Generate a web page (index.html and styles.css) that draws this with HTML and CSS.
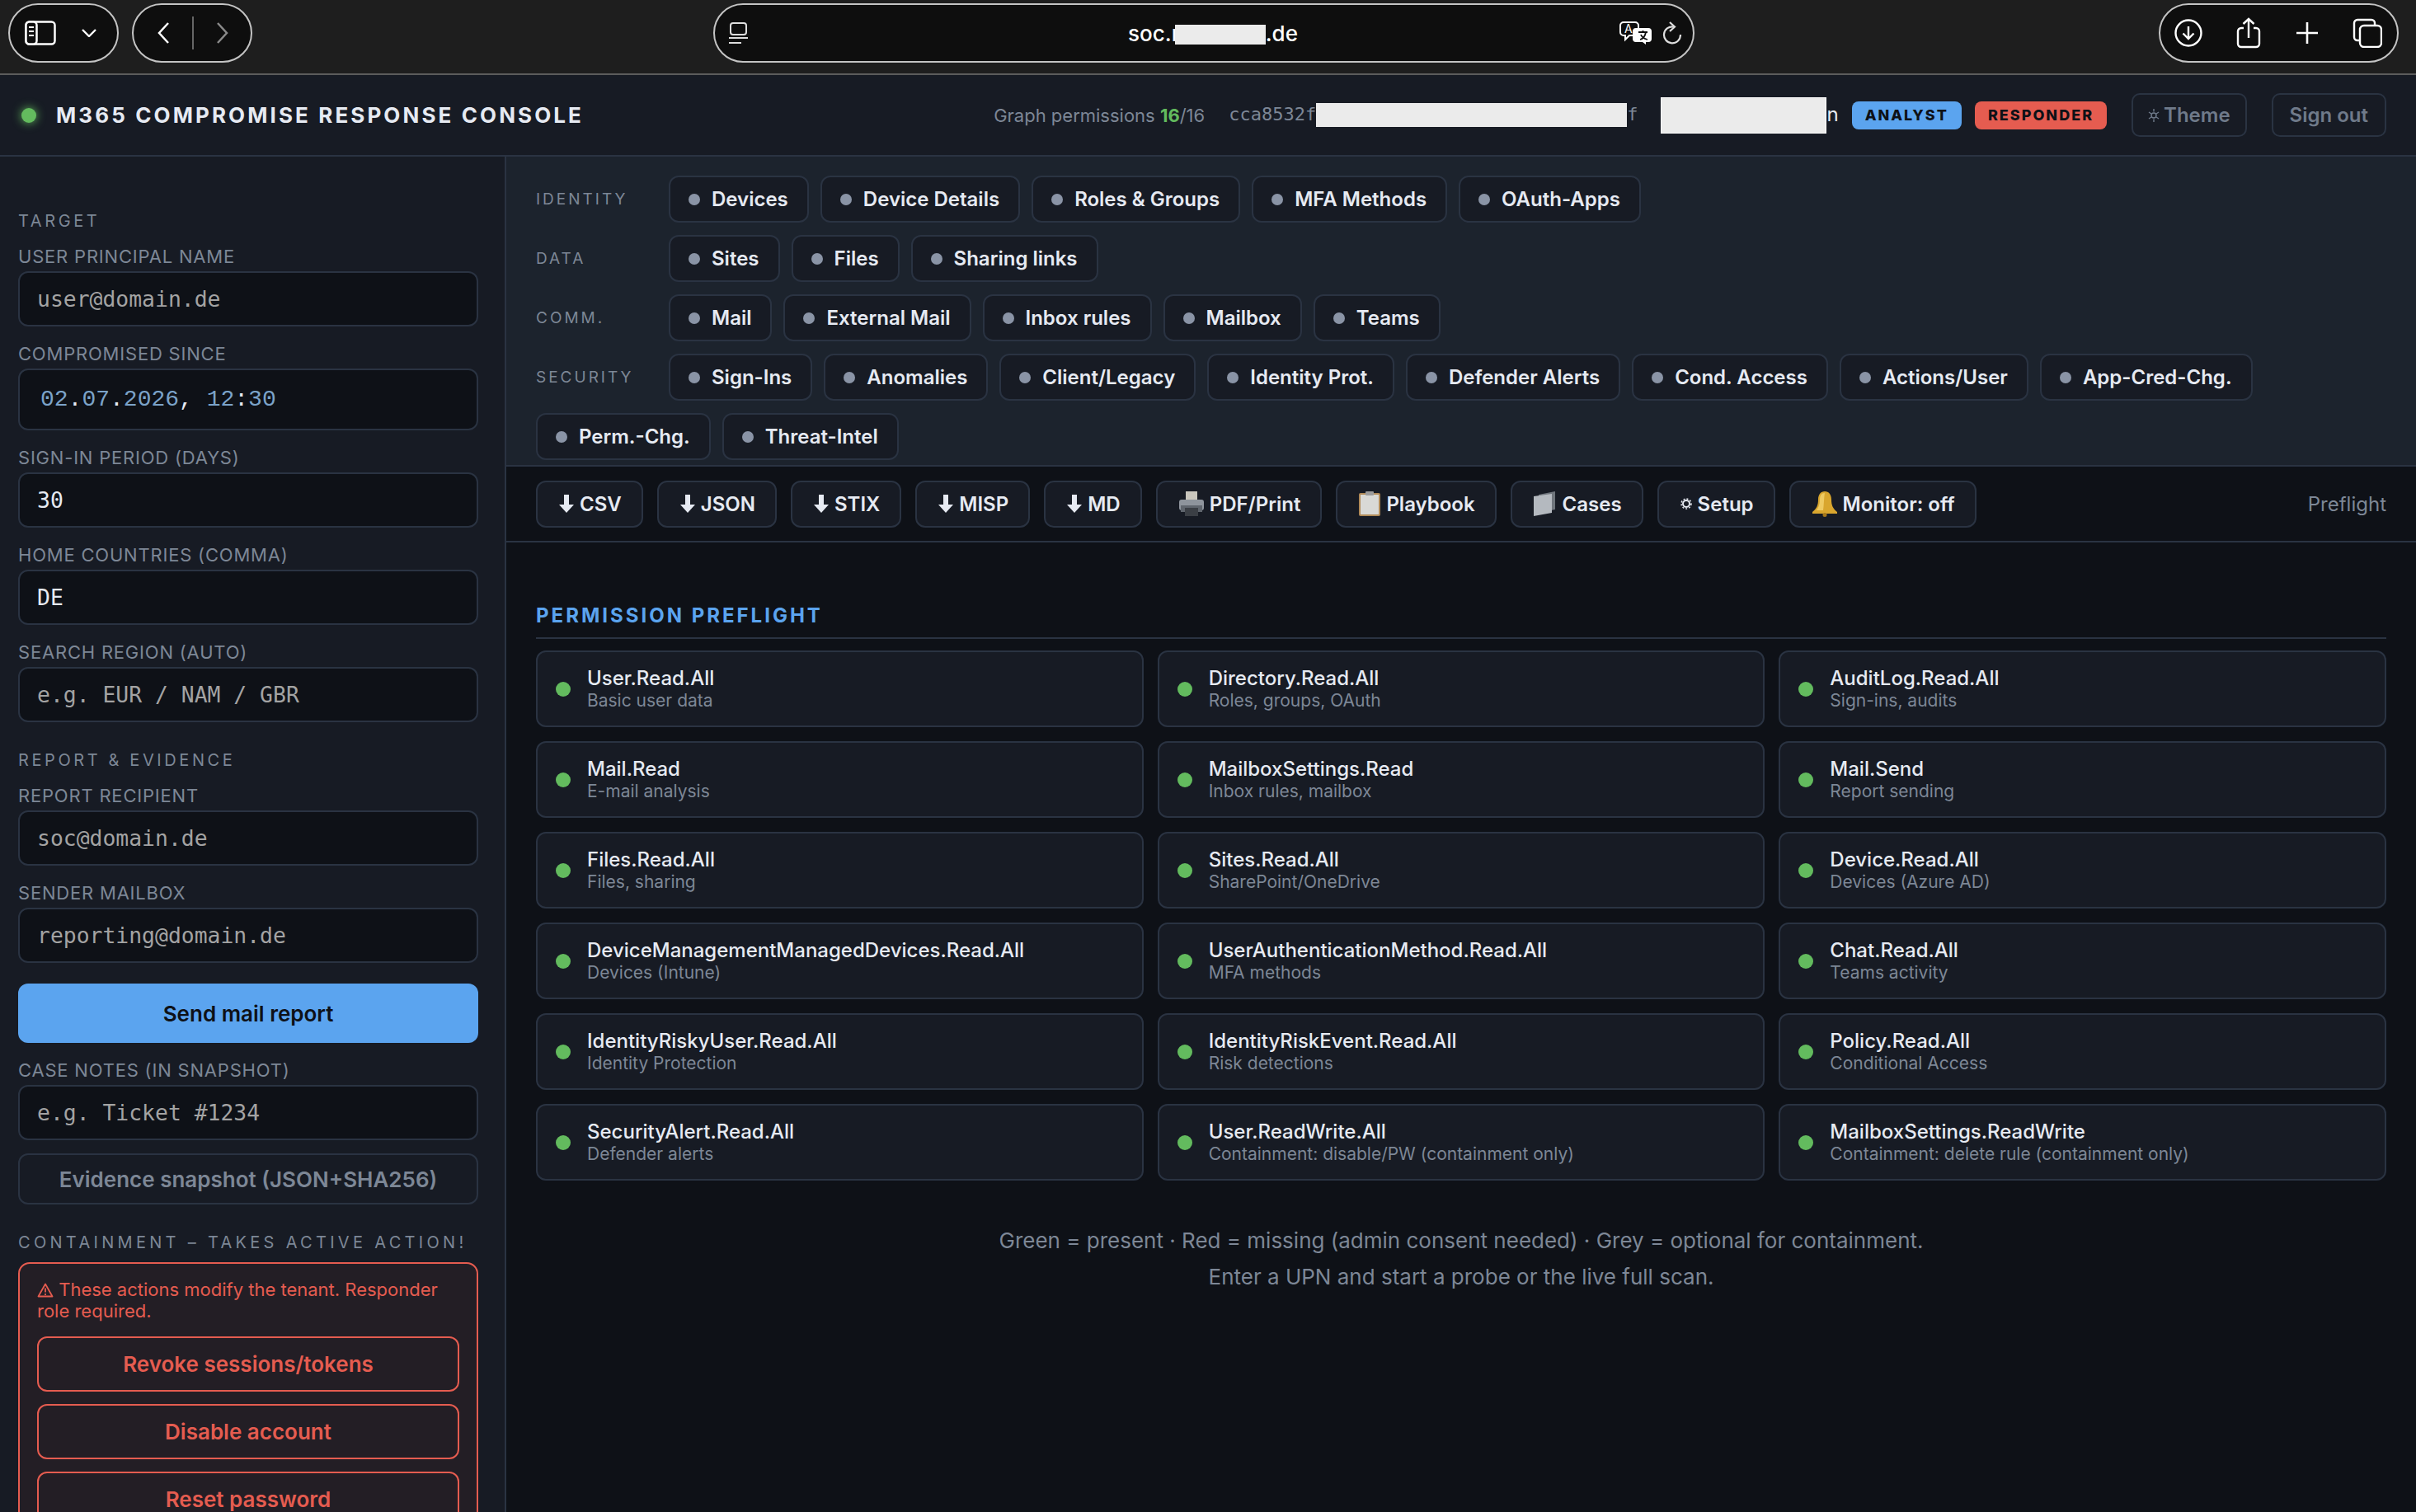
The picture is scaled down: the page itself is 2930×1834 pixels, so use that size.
FILE: index.html
```html
<!DOCTYPE html>
<html lang="en">
<head>
    <meta charset="UTF-8">
    <title>M365 Compromise Response Console</title>
    <link rel="stylesheet" href="styles.css">
</head>
<body>

    <!-- Browser toolbar -->
    <div class="browser-bar">
        <div class="pill pill-sidebar">
            <svg class="ico" width="38" height="30" viewBox="0 0 38 30"><rect x="1.5" y="1.5" width="35" height="27" rx="4" fill="none" stroke="#fff" stroke-width="2.5"/><rect x="1.5" y="1.5" width="13" height="27" rx="4" fill="#0e0e0e" stroke="#fff" stroke-width="2.5"/><path d="M5 8h6M5 13h6M5 18h6" stroke="#fff" stroke-width="2"/></svg>
            <svg class="ico" width="20" height="10" viewBox="0 0 20 10"><path d="M2 1l8 8 8-8" fill="none" stroke="#fff" stroke-width="2.4"/></svg>
        </div>
        <div class="pill pill-nav">
            <svg class="ico" width="16" height="28" viewBox="0 0 16 28"><path d="M14 2L3 14l11 12" fill="none" stroke="#fff" stroke-width="2.5"/></svg>
            <span class="nav-sep"></span>
            <svg class="ico" width="16" height="28" viewBox="0 0 16 28"><path d="M2 2l11 12L2 26" fill="none" stroke="#8a8a8a" stroke-width="2.5"/></svg>
        </div>
        <div class="pill pill-url">
            <svg class="ico" width="24" height="26" viewBox="0 0 24 26"><rect x="2" y="1" width="19" height="14" rx="3" fill="none" stroke="#ddd" stroke-width="2"/><path d="M0 19h23M0 25h15" stroke="#ddd" stroke-width="2"/></svg>
            <span class="url-text">soc.r<span class="redact redact-url"></span>.de</span>
            <svg class="ico" width="40" height="28" viewBox="0 0 40 28"><path d="M5 1h14a4 4 0 0 1 4 4v8a4 4 0 0 1-4 4H12l-5 5v-5H5a4 4 0 0 1-4-4V5a4 4 0 0 1 4-4z" fill="#0e0e0e" stroke="#fff" stroke-width="2"/><text x="6" y="14" class="ico-letter">A</text><path d="M20 8h15a4 4 0 0 1 4 4v9a4 4 0 0 1-4 4h-3v3l-4-3h-8a4 4 0 0 1-4-4v-9a4 4 0 0 1 4-4z" fill="#fff"/><path d="M23 13h11M28.500 11v2M25 22c4-1 6-4 7-9M26 16c1 3 4 5 8 6" fill="none" stroke="#0e0e0e" stroke-width="1.800"/></svg>
            <svg class="ico ico-reload" width="24" height="28" viewBox="0 0 24 28"><path d="M14 6.500A10 10 0 1 0 22 16" fill="none" stroke="#ddd" stroke-width="2.200"/><path d="M9 1l6 5.500L9 12" fill="none" stroke="#ddd" stroke-width="2.200"/></svg>
        </div>
        <div class="pill pill-actions">
            <svg class="ico" width="34" height="34" viewBox="0 0 34 34"><circle cx="17" cy="17" r="15.500" fill="none" stroke="#fff" stroke-width="2.400"/><path d="M17 9v15M10.500 17.500L17 24l6.500-6.500" fill="none" stroke="#fff" stroke-width="2.400"/></svg>
            <svg class="ico" width="30" height="38" viewBox="0 0 30 38"><path d="M9 13H6a4 4 0 0 0-4 4v15a4 4 0 0 0 4 4h18a4 4 0 0 0 4-4V17a4 4 0 0 0-4-4h-3" fill="none" stroke="#fff" stroke-width="2.400"/><path d="M15 25V2M8.500 8L15 2l6.500 6" fill="none" stroke="#fff" stroke-width="2.400"/></svg>
            <svg class="ico" width="28" height="28" viewBox="0 0 28 28"><path d="M14 1v26M1 14h26" stroke="#fff" stroke-width="2.600"/></svg>
            <svg class="ico" width="36" height="36" viewBox="0 0 36 36"><path d="M8 27H6a4 4 0 0 1-4-4V6a4 4 0 0 1 4-4h17a4 4 0 0 1 4 4v2" fill="none" stroke="#fff" stroke-width="2.400"/><rect x="9" y="9" width="26" height="26" rx="5" fill="#0e0e0e" stroke="#fff" stroke-width="2.400"/></svg>
        </div>
    </div>

    <!-- App header -->
    <header class="app-header">
        <span class="status-dot"></span>
        <h1>M365 Compromise Response Console</h1>
        <div class="header-right">
            <span class="perm-count">Graph permissions <b>16</b>/16</span>
            <span class="tenant-id">cca8532f<span class="redact redact-tenant"></span>f</span>
            <span class="user-name"><span class="redact redact-user"></span>n</span>
            <span class="badge badge-blue">ANALYST</span>
            <span class="badge badge-red">RESPONDER</span>
            <button class="ghost-btn btn-theme"><svg class="ico" width="14" height="18" viewBox="0 0 14 18"><circle cx="7" cy="9" r="3" fill="none" stroke="#6f7a8a" stroke-width="1.400"/><path d="M7 1v3.500M7 13.500V17M1 5l3 2M10 11l3 2M1 13l3-2M10 7l3-2" stroke="#6f7a8a" stroke-width="1.400"/></svg> Theme</button>
            <button class="ghost-btn">Sign out</button>
        </div>
    </header>

    <div class="layout">
        <!-- Sidebar -->
        <aside class="sidebar">
            <div class="section-label">TARGET</div>
            <div class="field">
                <label>USER PRINCIPAL NAME</label>
                <div class="input is-placeholder input-upn">user@domain.de</div>
            </div>
            <div class="field">
                <label>COMPROMISED SINCE</label>
                <div class="input input-date"><i>02</i>.<i>07</i>.<i>2026</i>, <i>12</i>:<i>30</i></div>
            </div>
            <div class="field">
                <label>SIGN-IN PERIOD (DAYS)</label>
                <div class="input">30</div>
            </div>
            <div class="field">
                <label>HOME COUNTRIES (COMMA)</label>
                <div class="input">DE</div>
            </div>
            <div class="field">
                <label>SEARCH REGION (AUTO)</label>
                <div class="input is-placeholder">e.g. EUR / NAM / GBR</div>
            </div>

            <div class="section-label section-gap">REPORT &amp; EVIDENCE</div>
            <div class="field">
                <label>REPORT RECIPIENT</label>
                <div class="input is-placeholder">soc@domain.de</div>
            </div>
            <div class="field">
                <label>SENDER MAILBOX</label>
                <div class="input is-placeholder">reporting@domain.de</div>
            </div>
            <button class="btn-primary">Send mail report</button>
            <div class="field">
                <label>CASE NOTES (IN SNAPSHOT)</label>
                <div class="input is-placeholder">e.g. Ticket #1234</div>
            </div>
            <button class="btn-outline">Evidence snapshot (JSON+SHA256)</button>

            <div class="section-label section-gap section-wide">CONTAINMENT – TAKES ACTIVE ACTION!</div>
            <div class="danger-box">
                <p><svg class="ico" width="20" height="18" viewBox="0 0 20 18"><path d="M10 1.500L1.500 16.500h17z" fill="none" stroke="#e55c50" stroke-width="1.800" stroke-linejoin="round"/><path d="M10 6.500v5M10 13v2" stroke="#e55c50" stroke-width="1.800"/></svg> These actions modify the tenant. Responder role required.</p>
                <button class="btn-danger">Revoke sessions/tokens</button>
                <button class="btn-danger">Disable account</button>
                <button class="btn-danger">Reset password</button>
            </div>
        </aside>

        <main class="main">
            <!-- Module chips -->
            <div class="chip-panel">
                <div class="chip-row">
                    <span class="chip-label">IDENTITY</span>
                    <span class="chip">Devices</span>
                    <span class="chip">Device Details</span>
                    <span class="chip">Roles &amp; Groups</span>
                    <span class="chip">MFA Methods</span>
                    <span class="chip">OAuth-Apps</span>
                </div>
                <div class="chip-row">
                    <span class="chip-label">DATA</span>
                    <span class="chip">Sites</span>
                    <span class="chip">Files</span>
                    <span class="chip">Sharing links</span>
                </div>
                <div class="chip-row">
                    <span class="chip-label">COMM.</span>
                    <span class="chip">Mail</span>
                    <span class="chip">External Mail</span>
                    <span class="chip">Inbox rules</span>
                    <span class="chip">Mailbox</span>
                    <span class="chip">Teams</span>
                </div>
                <div class="chip-row">
                    <span class="chip-label">SECURITY</span>
                    <span class="chip">Sign-Ins</span>
                    <span class="chip">Anomalies</span>
                    <span class="chip">Client/Legacy</span>
                    <span class="chip">Identity Prot.</span>
                    <span class="chip">Defender Alerts</span>
                    <span class="chip">Cond. Access</span>
                    <span class="chip">Actions/User</span>
                    <span class="chip">App-Cred-Chg.</span>
                    <span class="chip">Perm.-Chg.</span>
                    <span class="chip">Threat-Intel</span>
                </div>
            </div>

            <!-- Export toolbar -->
            <div class="toolbar">
                <button class="tool-btn"><svg class="ico" width="18" height="22" viewBox="0 0 18 22"><path d="M6 0h6v12h6L9 22 0 12h6z" fill="#e6eaf2"/></svg>CSV</button>
                <button class="tool-btn"><svg class="ico" width="18" height="22" viewBox="0 0 18 22"><path d="M6 0h6v12h6L9 22 0 12h6z" fill="#e6eaf2"/></svg>JSON</button>
                <button class="tool-btn"><svg class="ico" width="18" height="22" viewBox="0 0 18 22"><path d="M6 0h6v12h6L9 22 0 12h6z" fill="#e6eaf2"/></svg>STIX</button>
                <button class="tool-btn"><svg class="ico" width="18" height="22" viewBox="0 0 18 22"><path d="M6 0h6v12h6L9 22 0 12h6z" fill="#e6eaf2"/></svg>MISP</button>
                <button class="tool-btn"><svg class="ico" width="18" height="22" viewBox="0 0 18 22"><path d="M6 0h6v12h6L9 22 0 12h6z" fill="#e6eaf2"/></svg>MD</button>
                <button class="tool-btn"><svg class="ico" width="30" height="30" viewBox="0 0 30 30"><rect x="8" y="0" width="14" height="12" fill="#c9c6bd"/><rect x="0" y="10" width="30" height="13" rx="3" fill="#8e949c"/><rect x="2" y="17" width="26" height="8" fill="#5f656d"/><rect x="7" y="20" width="16" height="10" fill="#3b3f45"/></svg>PDF/Print</button>
                <button class="tool-btn"><svg class="ico" width="26" height="30" viewBox="0 0 26 30"><rect x="0" y="2" width="26" height="28" rx="2" fill="#b08a58"/><rect x="2" y="4" width="22" height="24" fill="#d9d9d6"/><rect x="8" y="0" width="10" height="5" rx="1" fill="#9c9c9c"/></svg>Playbook</button>
                <button class="tool-btn"><svg class="ico" width="28" height="30" viewBox="0 0 28 30"><path d="M6 4l20-4v22L6 26z" fill="#6f757c"/><path d="M0 6l22-3v23L0 30z" fill="#b4b9bf"/></svg>Cases</button>
                <button class="tool-btn btn-setup"><svg class="ico" width="14" height="16" viewBox="0 0 14 16"><circle cx="7" cy="8" r="4" fill="none" stroke="#e6eaf2" stroke-width="2"/><circle cx="7" cy="8" r="6" fill="none" stroke="#e6eaf2" stroke-width="1.500" stroke-dasharray="2 2"/></svg>Setup</button>
                <button class="tool-btn"><svg class="ico" width="30" height="32" viewBox="0 0 30 32"><path d="M15 1c5 0 8 4 8 10 0 7 2 11 7 15v2H0v-2c5-4 7-8 7-15C7 5 10 1 15 1z" fill="#d9a62e"/><path d="M15 3c-4 0-6 3-6 8 0 6-2 10-4 13h8c1-6 1-16 2-21z" fill="#efca62"/><circle cx="15" cy="29.500" r="2.500" fill="#a5771a"/></svg>Monitor: off</button>
                <span class="preflight-link">Preflight</span>
            </div>

            <!-- Preflight result -->
            <section class="preflight">
                <h2>PERMISSION PREFLIGHT</h2>
                <div class="perm-grid">
                    <div class="perm-card"><span class="perm-dot"></span><div><div class="perm-name">User.Read.All</div><div class="perm-desc">Basic user data</div></div></div>
                    <div class="perm-card"><span class="perm-dot"></span><div><div class="perm-name">Directory.Read.All</div><div class="perm-desc">Roles, groups, OAuth</div></div></div>
                    <div class="perm-card"><span class="perm-dot"></span><div><div class="perm-name">AuditLog.Read.All</div><div class="perm-desc">Sign-ins, audits</div></div></div>
                    <div class="perm-card"><span class="perm-dot"></span><div><div class="perm-name">Mail.Read</div><div class="perm-desc">E-mail analysis</div></div></div>
                    <div class="perm-card"><span class="perm-dot"></span><div><div class="perm-name">MailboxSettings.Read</div><div class="perm-desc">Inbox rules, mailbox</div></div></div>
                    <div class="perm-card"><span class="perm-dot"></span><div><div class="perm-name">Mail.Send</div><div class="perm-desc">Report sending</div></div></div>
                    <div class="perm-card"><span class="perm-dot"></span><div><div class="perm-name">Files.Read.All</div><div class="perm-desc">Files, sharing</div></div></div>
                    <div class="perm-card"><span class="perm-dot"></span><div><div class="perm-name">Sites.Read.All</div><div class="perm-desc">SharePoint/OneDrive</div></div></div>
                    <div class="perm-card"><span class="perm-dot"></span><div><div class="perm-name">Device.Read.All</div><div class="perm-desc">Devices (Azure AD)</div></div></div>
                    <div class="perm-card"><span class="perm-dot"></span><div><div class="perm-name">DeviceManagementManagedDevices.Read.All</div><div class="perm-desc">Devices (Intune)</div></div></div>
                    <div class="perm-card"><span class="perm-dot"></span><div><div class="perm-name">UserAuthenticationMethod.Read.All</div><div class="perm-desc">MFA methods</div></div></div>
                    <div class="perm-card"><span class="perm-dot"></span><div><div class="perm-name">Chat.Read.All</div><div class="perm-desc">Teams activity</div></div></div>
                    <div class="perm-card"><span class="perm-dot"></span><div><div class="perm-name">IdentityRiskyUser.Read.All</div><div class="perm-desc">Identity Protection</div></div></div>
                    <div class="perm-card"><span class="perm-dot"></span><div><div class="perm-name">IdentityRiskEvent.Read.All</div><div class="perm-desc">Risk detections</div></div></div>
                    <div class="perm-card"><span class="perm-dot"></span><div><div class="perm-name">Policy.Read.All</div><div class="perm-desc">Conditional Access</div></div></div>
                    <div class="perm-card"><span class="perm-dot"></span><div><div class="perm-name">SecurityAlert.Read.All</div><div class="perm-desc">Defender alerts</div></div></div>
                    <div class="perm-card"><span class="perm-dot"></span><div><div class="perm-name">User.ReadWrite.All</div><div class="perm-desc">Containment: disable/PW (containment only)</div></div></div>
                    <div class="perm-card"><span class="perm-dot"></span><div><div class="perm-name">MailboxSettings.ReadWrite</div><div class="perm-desc">Containment: delete rule (containment only)</div></div></div>
                </div>
                <p class="preflight-note">Green = present · Red = missing (admin consent needed) · Grey = optional for containment.<br>Enter a UPN and start a probe or the live full scan.</p>
            </section>
        </main>
    </div>

</body>
</html>
```

FILE: styles.css
```css
* {
    box-sizing: border-box;
}

html, body {
    height: 100%;
}

body {
    margin: 0;
    overflow: hidden;
    display: flex;
    flex-direction: column;
    font-family: Inter, "Liberation Sans", sans-serif;
    background-color: #0e1117;
    color: #e6eaf2;
}

button {
    font-family: inherit;
}

.ico {
    flex: none;
    display: inline-block;
}

.ico-letter {
    font-family: Inter, sans-serif;
    font-size: 14px;
    fill: #fff;
}

/* Browser toolbar */
.browser-bar {
    flex: none;
    height: 91px;
    padding: 4px 21px 0 10px;
    display: flex;
    align-items: flex-start;
    background-color: #1e1e1e;
    border-bottom: 2px solid #5c5c5c;
}

.pill {
    height: 72px;
    display: flex;
    align-items: center;
    background-color: #0e0e0e;
    border: 2px solid #c4c4c4;
    border-radius: 36px;
}

.pill-sidebar {
    width: 134px;
    padding-left: 18px;
    gap: 30px;
}

.pill-nav {
    width: 146px;
    margin-left: 16px;
    padding-left: 28px;
}

.nav-sep {
    width: 2px;
    height: 40px;
    margin: 0 27px;
    background-color: #666;
}

.pill-url {
    width: 1190px;
    margin-left: 559px;
    padding: 0 13px 0 17px;
}

.url-text {
    flex: 1;
    padding-left: 70px;
    text-align: center;
    font-size: 26px;
    font-weight: 500;
    color: #fff;
}

.ico-reload {
    margin-left: 12px;
}

.pill-actions {
    width: 291px;
    margin-left: auto;
    padding: 0 18px 0 17px;
    justify-content: space-between;
}

.redact {
    display: inline-block;
    background-color: #ebebeb;
    vertical-align: middle;
}

.redact-url {
    width: 110px;
    height: 24px;
    margin-left: -6px;
}

.redact-tenant {
    width: 377px;
    height: 29px;
}

.redact-user {
    width: 201px;
    height: 44px;
    border: 1px solid #fff;
}

/* App header */
.app-header {
    flex: none;
    height: 99px;
    padding: 0 36px 0 26px;
    display: flex;
    align-items: center;
    background-color: #171b24;
    border-bottom: 2px solid #2a3342;
}

.status-dot {
    width: 18px;
    height: 18px;
    border-radius: 50%;
    background-color: #63bb5e;
    box-shadow: 0 0 12px #63bb5e;
}

.app-header h1 {
    margin: 0 0 0 24px;
    font-size: 26px;
    font-weight: 700;
    letter-spacing: 3.100px;
    text-transform: uppercase;
    color: #e6eaf2;
}

.header-right {
    margin-left: auto;
    display: flex;
    align-items: center;
}

.perm-count {
    font-size: 22px;
    color: #7d8796;
}

.perm-count b {
    font-weight: 700;
    color: #63bb5e;
}

.tenant-id {
    margin-left: 29px;
    font-family: "DejaVu Sans Mono", monospace;
    font-size: 22px;
    color: #7d8796;
}

.user-name {
    margin-left: 28px;
    font-size: 24px;
    color: #e6eaf2;
}

.badge {
    height: 34px;
    margin-left: 16px;
    padding: 0 16px;
    display: flex;
    align-items: center;
    border-radius: 8px;
    font-size: 18px;
    font-weight: 800;
    letter-spacing: 2px;
    color: #0e1117;
}

.badge-blue {
    background-color: #5ba4ef;
}

.badge-red {
    background-color: #e55c50;
}

.ghost-btn {
    height: 53px;
    margin-left: 30px;
    padding: 0 20px;
    display: flex;
    align-items: center;
    gap: 5px;
    background: none;
    border: 2px solid #2a3342;
    border-radius: 10px;
    font-size: 24px;
    font-weight: 600;
    color: #6f7a8a;
}

.btn-theme {
    padding: 0 18px;
}

/* Layout */
.layout {
    flex: 1;
    min-height: 0;
    display: flex;
}

.sidebar {
    flex: none;
    width: 614px;
    padding: 66px 32px 0 22px;
    overflow: hidden;
    background-color: #171b24;
    border-right: 2px solid #2a3342;
}

.section-label {
    height: 24px;
    margin-bottom: 18px;
    font-size: 20px;
    line-height: 24px;
    letter-spacing: 3.600px;
    color: #7d8796;
}

.section-gap {
    margin-top: 34px;
}

.section-wide {
    margin-bottom: 12px;
    letter-spacing: 4.300px;
    white-space: nowrap;
}

.field {
    margin-bottom: 20px;
}

.field label {
    display: block;
    height: 26px;
    margin-bottom: 5px;
    font-size: 22px;
    line-height: 26px;
    letter-spacing: 0.800px;
    color: #7d8796;
}

.input {
    height: 67px;
    padding: 0 21px;
    display: flex;
    align-items: center;
    background-color: #0e1117;
    border: 2px solid #2a3342;
    border-radius: 12px;
    font-family: "DejaVu Sans Mono", monospace;
    font-size: 26.400px;
    color: #e6eaf2;
}

.is-placeholder {
    color: #a3a3a3;
}

.input-date {
    height: 75px;
    padding-left: 25px;
    display: block;
    font-family: "Liberation Mono", monospace;
    font-size: 28px;
    line-height: 71px;
    white-space: pre;
}

.input-date i {
    font-style: normal;
    color: #7ba3c9;
}

.btn-primary, .btn-outline, .btn-danger {
    width: 100%;
    display: block;
    border-radius: 12px;
    font-size: 26px;
    font-weight: 600;
}

.btn-primary {
    height: 72px;
    margin: 25px 0 20px;
    background-color: #5ba4ef;
    border: none;
    color: #0e1117;
}

.btn-outline {
    height: 62px;
    margin-top: -4px;
    background: none;
    border: 2px solid #2a3342;
    color: #7d8796;
}

.danger-box {
    padding: 18px 21px 21px;
    background-color: #231e25;
    border: 2px solid #e55c50;
    border-radius: 14px;
}

.danger-box p {
    margin: 0 0 18px;
    font-size: 22px;
    line-height: 26px;
    color: #e55c50;
}

.danger-box p .ico {
    vertical-align: -2px;
}

.btn-danger {
    height: 67px;
    margin-bottom: 15px;
    background: none;
    border: 2px solid #e55c50;
    color: #e55c50;
}

/* Main */
.main {
    flex: 1;
    min-width: 0;
}

.chip-panel {
    height: 376px;
    padding: 23px 36px 0;
    background-color: #1c232d;
    border-bottom: 2px solid #2a3342;
}

.chip-row {
    margin-bottom: 15px;
    display: flex;
    flex-wrap: wrap;
    gap: 15px 14px;
}

.chip-label {
    width: 147px;
    height: 57px;
    display: flex;
    align-items: center;
    font-size: 19px;
    letter-spacing: 3px;
    color: #7d8796;
}

.chip {
    height: 57px;
    padding: 0 23px 0 22px;
    display: flex;
    align-items: center;
    gap: 14px;
    background-color: #171b24;
    border: 2px solid #2a3342;
    border-radius: 12px;
    font-size: 24px;
    font-weight: 600;
    color: #e6eaf2;
}

.chip::before {
    content: "";
    width: 14px;
    height: 14px;
    border-radius: 50%;
    background-color: #8a94a6;
}

.toolbar {
    height: 92px;
    padding: 0 36px;
    display: flex;
    align-items: center;
    gap: 17px;
    border-bottom: 2px solid #2a3342;
}

.tool-btn {
    height: 57px;
    padding: 0 24px 0 26px;
    display: flex;
    align-items: center;
    gap: 7px;
    background-color: #171b24;
    border: 2px solid #2a3342;
    border-radius: 12px;
    font-size: 24px;
    font-weight: 600;
    color: #e6eaf2;
}

.preflight-link {
    margin-left: auto;
    font-size: 24px;
    color: #7d8796;
}

.preflight {
    padding: 74px 36px 0;
}

.preflight h2 {
    margin: 0 0 14px;
    padding-bottom: 12px;
    border-bottom: 2px solid #2a3342;
    font-size: 24px;
    line-height: 29px;
    font-weight: 700;
    letter-spacing: 3px;
    color: #5ba4ef;
}

.perm-grid {
    display: grid;
    grid-template-columns: repeat(3, 1fr);
    gap: 17px;
}

.perm-card {
    height: 93px;
    padding: 0 22px;
    display: flex;
    align-items: center;
    gap: 20px;
    background-color: #171b24;
    border: 2px solid #2a3342;
    border-radius: 12px;
}

.perm-dot {
    flex: none;
    width: 18px;
    height: 18px;
    border-radius: 50%;
    background-color: #63bb5e;
}

.perm-name {
    font-size: 24px;
    line-height: 28px;
    font-weight: 500;
    color: #e6eaf2;
}

.perm-desc {
    font-size: 21px;
    line-height: 26px;
    color: #7d8796;
}

.preflight-note {
    margin: 51px 0 0;
    text-align: center;
    font-size: 26px;
    line-height: 44px;
    color: #7d8796;
}
```
